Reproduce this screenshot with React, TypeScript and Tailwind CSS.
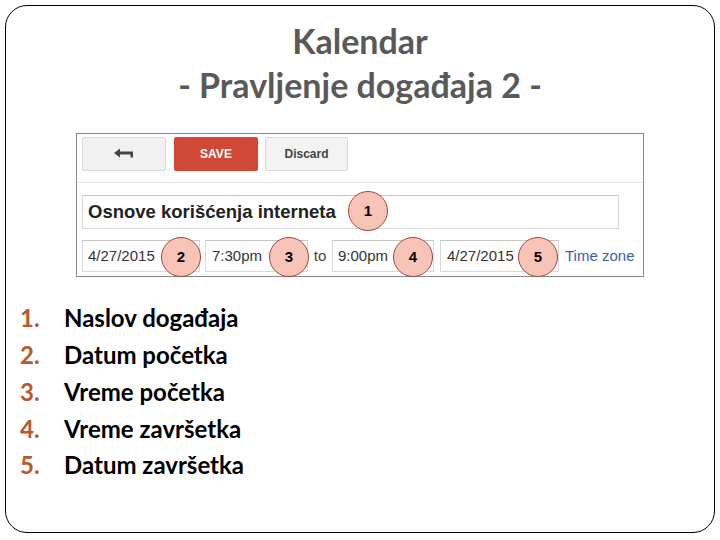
import React from "react";

const Circle = ({ n, left, top }: { n: number; left: number; top: number }) => (
  <div
    className="absolute w-[40px] h-[40px] rounded-full bg-[#f8c4b8] border border-[#9c4a3c] flex items-center justify-center text-[15px] font-bold text-black"
    style={{ left, top, fontFamily: "Arial, 'Liberation Sans', sans-serif" }}
  >
    {n}
  </div>
);

const items = ["Naslov događaja", "Datum početka", "Vreme početka", "Vreme završetka", "Datum završetka"];

export default function App() {
  return (
    <div className="w-[720px] h-[540px] bg-white overflow-hidden pt-[5px] pl-[5px]">
      <div className="w-[710px] h-[528px] rounded-[22px] border border-black font-['Lato',sans-serif]">
        <div className="pt-[13px] text-center text-[#595959] text-[34px] font-bold leading-[44px]">
          <div>Kalendar</div>
          <div>- Pravljenje događaja 2 -</div>
        </div>

        <div
          className="relative ml-[70px] mt-[26px] w-[568px] h-[144px] border border-[#8a8a8a] bg-white"
          style={{ fontFamily: "Arial, 'Liberation Sans', sans-serif" }}
        >
          <div className="flex pt-[3px] pl-[5px] pb-[11px] border-b border-[#e6e6e6]">
            <div className="w-[84px] h-[34px] bg-[#f1f1f1] border border-[#d8d8d8] rounded-[2px] flex items-center justify-center">
              <svg width="20" height="12" viewBox="0 0 20 12">
                <path d="M0 5 L6 0.5 L6 3.5 L19 3.5 L19 9.5 L16.5 9.5 L16.5 6.5 L6 6.5 L6 9.5 Z" fill="#444" />
              </svg>
            </div>
            <div className="ml-[8px] w-[84px] h-[34px] bg-[#d14836] rounded-[2px] flex items-center justify-center text-white text-[12px] font-bold">
              SAVE
            </div>
            <div className="ml-[7px] w-[83px] h-[34px] bg-[#f3f3f3] border border-[#d8d8d8] rounded-[2px] flex items-center justify-center text-[#444] text-[12px] font-bold">
              Discard
            </div>
          </div>

          <div className="ml-[5px] mt-[12px] w-[537px] h-[34px] border border-[#d9d9d9] border-t-[#c4c4c4] flex items-center pl-[5px] text-[18.5px] font-bold text-[#222]">
            Osnove korišćenja interneta
          </div>

          <div className="flex items-center ml-[5px] mt-[11px] h-[32px] text-[15px] text-[#333]">
            <div className="w-[118px] h-[32px] border border-[#d9d9d9] border-t-[#c4c4c4] flex items-center pl-[5px]">4/27/2015</div>
            <div className="ml-[5px] w-[103px] h-[32px] border border-[#d9d9d9] border-t-[#c4c4c4] flex items-center pl-[6px]">7:30pm</div>
            <div className="w-[24px] text-center text-[#444]">to</div>
            <div className="w-[102px] h-[32px] border border-[#d9d9d9] border-t-[#c4c4c4] flex items-center pl-[5px]">9:00pm</div>
            <div className="ml-[6px] w-[119px] h-[32px] border border-[#d9d9d9] border-t-[#c4c4c4] flex items-center pl-[6px]">4/27/2015</div>
            <div className="ml-[6px] text-[#3b5fa8]">Time zone</div>
          </div>

          <Circle n={1} left={271} top={57} />
          <Circle n={2} left={84} top={103} />
          <Circle n={3} left={192} top={103} />
          <Circle n={4} left={316} top={103} />
          <Circle n={5} left={441} top={103} />
        </div>

        <div className="mt-[23px] pl-[14px]">
          {items.map((t, i) => (
            <div key={i} className="flex h-[36.75px] items-center text-[24px] font-bold">
              <span className="w-[44px] text-[#b65a2b]">{i + 1}.</span>
              <span className="text-black">{t}</span>
            </div>
          ))}
        </div>
      </div>
    </div>
  );
}
